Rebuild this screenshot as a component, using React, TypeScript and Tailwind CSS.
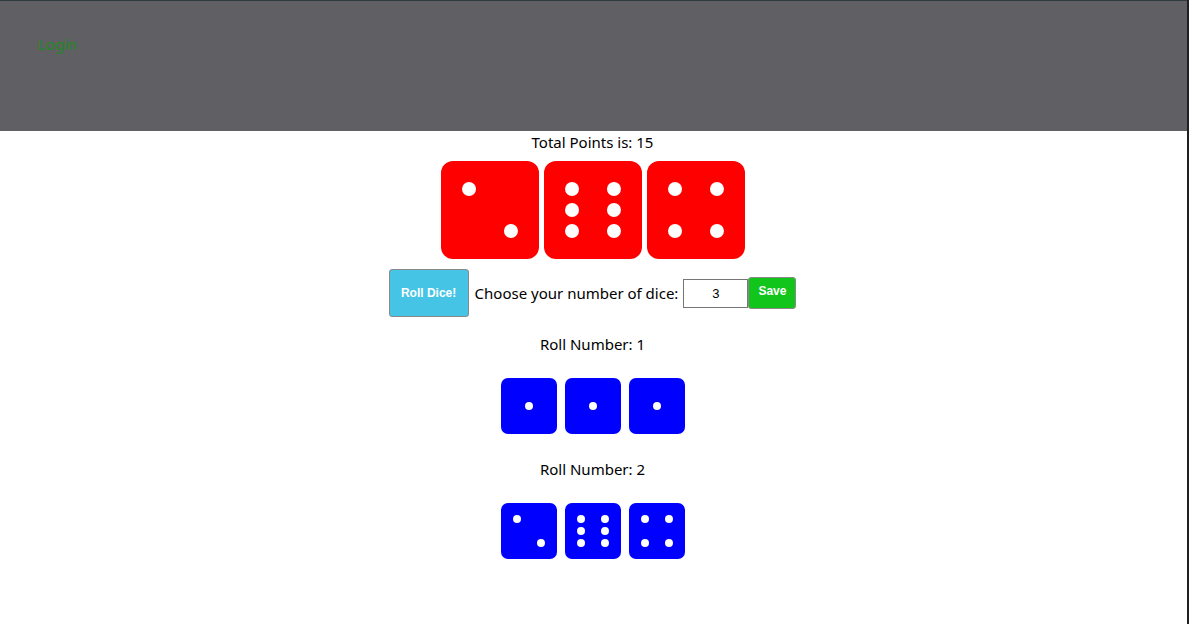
const RED = [2, 6, 4];

const PIPS: Record<number, [number, number][]> = {
  1: [[0.5, 0.5]],
  2: [[0.286, 0.286], [0.714, 0.714]],
  4: [[0.286, 0.286], [0.714, 0.286], [0.286, 0.714], [0.714, 0.714]],
  6: [
    [0.286, 0.286], [0.714, 0.286],
    [0.286, 0.5], [0.714, 0.5],
    [0.286, 0.714], [0.714, 0.714],
  ],
};

function Die({ value, size, color, r, dot }: { value: number; size: number; color: string; r: number; dot: number }) {
  return (
    <svg width={size} height={size} viewBox={`0 0 ${size} ${size}`}>
      <rect x="0" y="0" width={size} height={size} rx={r} fill={color} />
      {PIPS[value].map(([x, y], i) => (
        <circle key={i} cx={x * size} cy={y * size} r={dot} fill="#fff" />
      ))}
    </svg>
  );
}

const rolls = [
  { n: 1, dice: [1, 1, 1] },
  { n: 2, dice: [2, 6, 4] },
];

export default function App() {
  return (
    <div className="flex min-h-[624px] bg-white text-black font-['Noto_Sans',sans-serif] text-[15px]">
      <div className="flex-1 flex flex-col">
        {/* header */}
        <header className="h-[131px] bg-[#605f64] border-t border-[#2d3b40] pl-[38px] pt-[32px]">
          <a className="text-[#1f8a1f] leading-[20px]">Login</a>
        </header>

        {/* total + big dice */}
        <div className="flex flex-col items-center pr-[2px]">
          <p className="leading-[22px]">Total Points is: 15</p>
          <div className="mt-[8px] flex gap-[5px]">
            {RED.map((v, i) => (
              <Die key={i} value={v} size={98} color="#ff0000" r={12} dot={7} />
            ))}
          </div>

          {/* controls */}
          <div className="mt-[10px] flex items-center">
            <button className="w-[80px] h-[48px] bg-[#45c4e6] border border-[#8a8a8a] rounded-[3px] text-white font-bold text-[12px] font-['Liberation_Sans',sans-serif]">
              Roll Dice!
            </button>
            <span className="ml-[6px] mr-[5px]">Choose your number of dice:</span>
            <input
              defaultValue="3"
              className="w-[65px] h-[29px] border border-[#767676] text-center text-[13px] font-['Liberation_Sans',sans-serif] outline-none"
            />
            <button className="w-[48px] h-[32px] bg-[#11c51b] border border-[#8a8a8a] rounded-[3px] text-white font-bold text-[12px] font-['Liberation_Sans',sans-serif] pb-[5px]">
              Save
            </button>
          </div>

          {/* roll history */}
          {rolls.map((roll) => (
            <div key={roll.n} className="flex flex-col items-center mt-[16px] pb-[8px]">
              <p className="leading-[22px]">Roll Number: {roll.n}</p>
              <div className="mt-[23px] flex gap-[8px]">
                {roll.dice.map((v, i) => (
                  <Die key={i} value={v} size={56} color="#0000ff" r={7} dot={4} />
                ))}
              </div>
            </div>
          ))}
        </div>
      </div>
      <div className="w-[2px] bg-[#202020]" />
    </div>
  );
}
